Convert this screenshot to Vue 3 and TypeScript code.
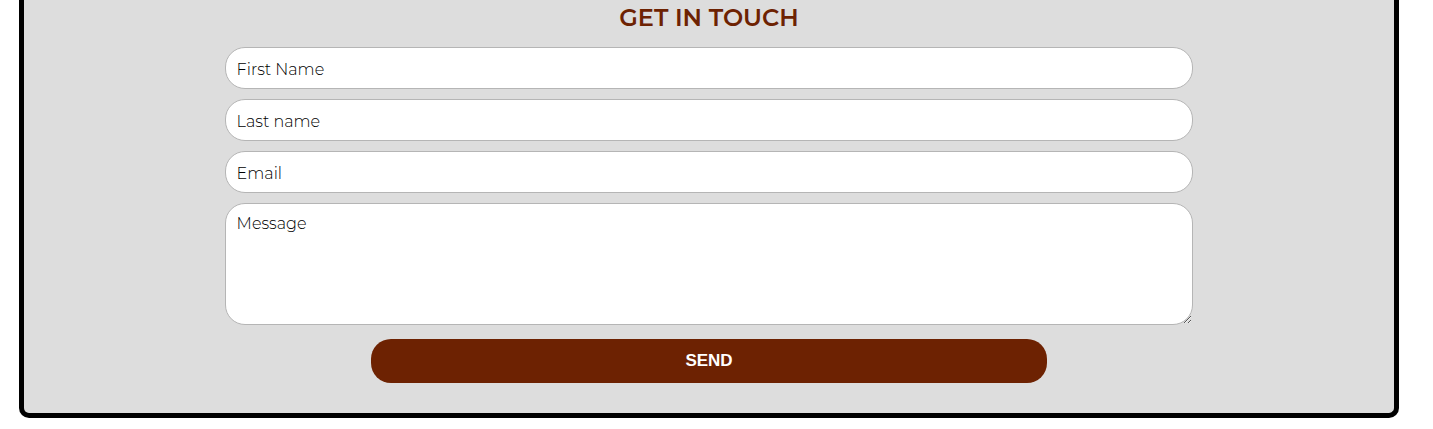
<script setup lang="ts">
import { reactive } from 'vue'

interface Field {
  key: 'firstName' | 'lastName' | 'email'
  label: string
  type: string
}

const fields: Field[] = [
  { key: 'firstName', label: 'First Name', type: 'text' },
  { key: 'lastName', label: 'Last name', type: 'text' },
  { key: 'email', label: 'Email', type: 'email' },
]

const form = reactive({ firstName: '', lastName: '', email: '', message: '' })
</script>

<template>
  <main class="contact">
    <h2 class="title">GET IN TOUCH</h2>
    <form class="form" @submit.prevent>
      <input
        v-for="field in fields"
        :key="field.key"
        v-model="form[field.key]"
        class="control"
        :type="field.type"
        :name="field.key"
        :placeholder="field.label"
        :aria-label="field.label"
      />
      <textarea
        v-model="form.message"
        class="control message"
        name="message"
        placeholder="Message"
        aria-label="Message"
      ></textarea>
      <button class="send" type="submit">SEND</button>
    </form>
  </main>
</template>

<style scoped>
.contact {
  margin: 0 34px 0 19px;
  padding: 4px 14% 30px;
  border: 5px solid #000;
  border-top: 0;
  border-radius: 0 0 10px 10px;
  background: #ddd;
  font-family: Montserrat, Inter, sans-serif;
}

.title {
  margin: 0 0 15px;
  color: #6d2202;
  font-size: 24px;
  font-weight: 600;
  line-height: 28px;
  text-align: center;
}

.form {
  display: flex;
  flex-direction: column;
  gap: 10px;
}

.control {
  box-sizing: border-box;
  width: 100%;
  height: 42px;
  margin: 0;
  padding: 10px 11px 8px;
  border: 1px solid #b5b5b5;
  border-radius: 20px;
  background: #fff;
  color: #000;
  font-family: inherit;
  font-size: 16px;
  font-weight: 300;
  line-height: 20px;
}

.control::placeholder {
  color: #000;
  opacity: 1;
}

.message {
  display: block;
  height: 122px;
  padding: 10px 11px;
  resize: vertical;
}

.send {
  align-self: center;
  width: calc(70% - 2px);
  height: 44px;
  margin-top: 4px;
  padding: 0;
  border: 0;
  border-radius: 20px;
  background: #6d2202;
  color: #fff;
  font-family: "Liberation Sans", Arial, sans-serif;
  font-size: 17px;
  font-weight: 700;
  cursor: pointer;
}
</style>

<style>
body {
  background: #fff;
}
</style>
